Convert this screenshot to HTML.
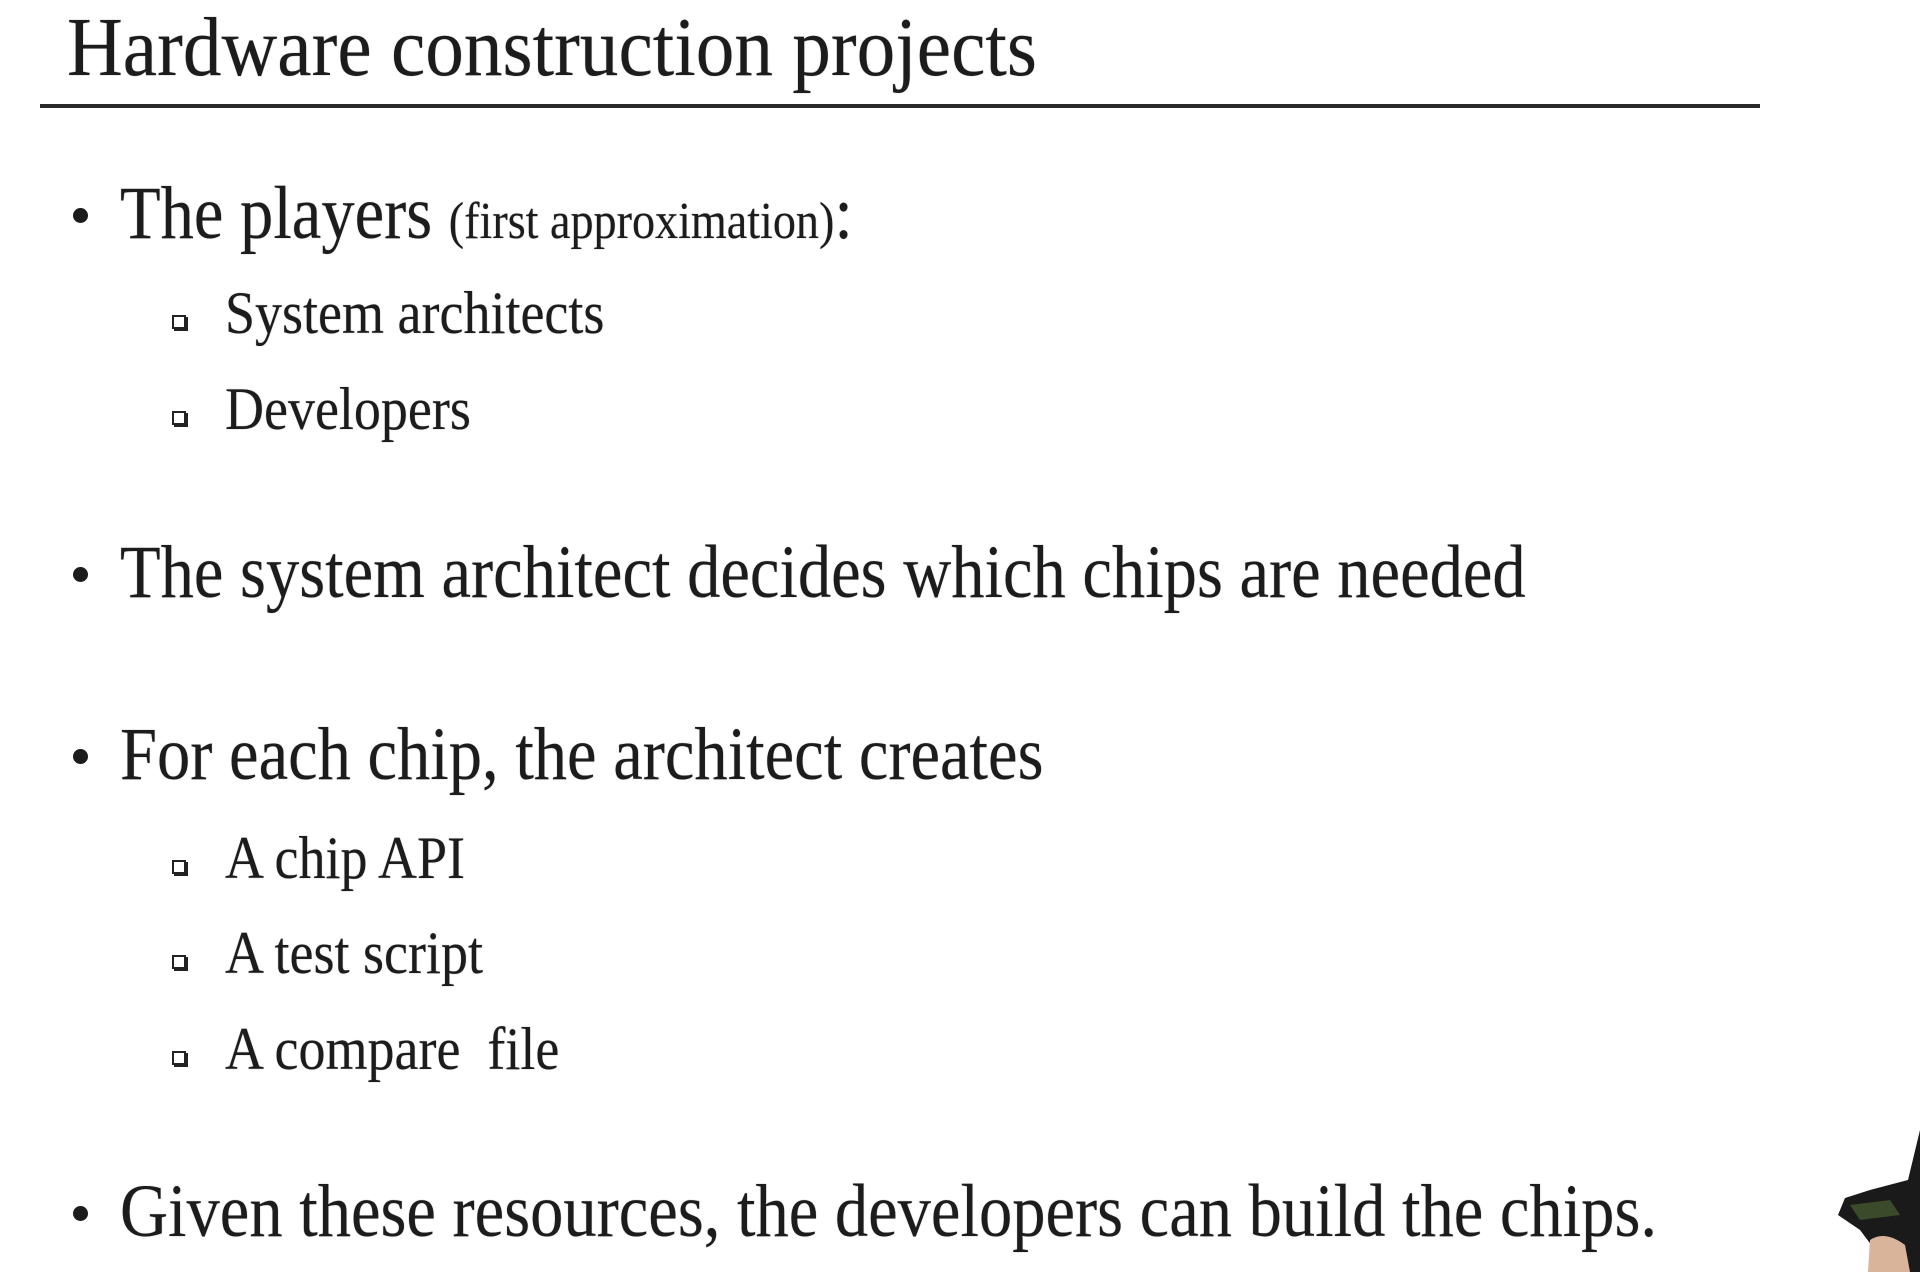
<!DOCTYPE html>
<html><head><meta charset="utf-8"><style>
html,body{margin:0;padding:0;background:#fff;}
body{width:1920px;height:1272px;position:relative;overflow:hidden;font-family:"Liberation Serif",serif;color:#1c1c1c;}
.t{position:absolute;line-height:1;white-space:nowrap;transform-origin:0 0;text-shadow:0 0 1px rgba(0,0,0,0.5);}
.title{font-size:84px;left:67px;top:6px;transform:scaleX(0.92);}
.m{font-size:75px;left:120px;transform:scaleX(0.887);}
.s{font-size:60px;left:225px;transform:scaleX(0.9);}
.sm{font-size:52px;}
.rule{position:absolute;left:40px;width:1720px;top:104px;height:4px;background:#2a2a2a;}
.dot{position:absolute;left:73px;width:15px;height:15px;border-radius:50%;background:#1c1c1c;}
.box{position:absolute;left:172px;width:10px;height:10px;border:2px solid #222;box-shadow:2px 2px 0 #222;}
</style></head><body>
<div class="t title">Hardware construction projects</div>
<div class="rule"></div>

<div class="dot" style="top:208px"></div>
<div class="t m" style="top:176px">The players <span class="sm">(first approximation)</span>:</div>
<div class="box" style="top:315px"></div>
<div class="t s" style="top:283px">System architects</div>
<div class="box" style="top:411px"></div>
<div class="t s" style="top:379px">Developers</div>

<div class="dot" style="top:567px"></div>
<div class="t m" style="top:535px">The system architect decides which chips are needed</div>

<div class="dot" style="top:749px"></div>
<div class="t m" style="top:717px">For each chip, the architect creates</div>
<div class="box" style="top:860px"></div>
<div class="t s" style="top:828px">A chip API</div>
<div class="box" style="top:955px"></div>
<div class="t s" style="top:923px">A test script</div>
<div class="box" style="top:1051px"></div>
<div class="t s" style="top:1019px">A compare&nbsp; file</div>

<div class="dot" style="top:1206px"></div>
<div class="t m" style="top:1174px">Given these resources, the developers can build the chips.</div>

<svg style="position:absolute;left:1830px;top:1120px" width="90" height="152" viewBox="0 0 90 152">
<path d="M90 10 L78 60 L40 70 L15 78 L8 95 L30 110 L45 130 L60 152 L90 152 Z" fill="#1a1a1a"/>
<path d="M40 120 Q55 110 75 125 L80 152 L38 152 Z" fill="#d9b49a"/>
<path d="M20 85 L60 80 L70 95 L30 100 Z" fill="#3b4a2a"/>
</svg>
</body></html>
